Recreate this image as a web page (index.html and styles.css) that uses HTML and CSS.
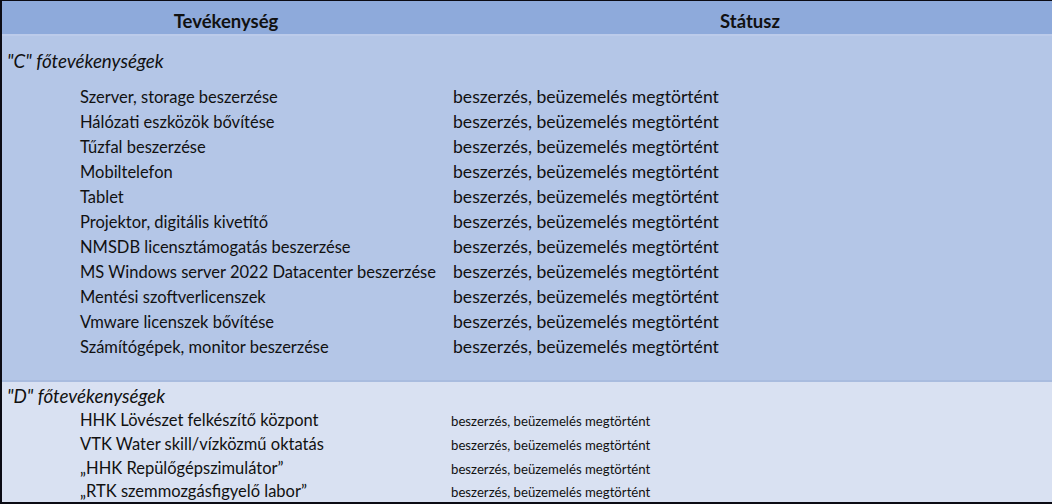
FILE: index.html
```html
<!DOCTYPE html>
<html lang="hu">
<head>
<meta charset="utf-8">
<link rel="stylesheet" href="styles.css">
</head>
<body>
<div class="sheet">
  <div class="head">
    <div class="hcell c1">Tevékenység</div>
    <div class="hcell c2">Státusz</div>
  </div>
  <div class="sec sec-c">
    <div class="label">"C" főtevékenységek</div>
    <div class="rows">
      <div class="row"><span class="act">Szerver, storage beszerzése</span><span class="st">beszerzés, beüzemelés megtörtént</span></div>
      <div class="row"><span class="act">Hálózati eszközök bővítése</span><span class="st">beszerzés, beüzemelés megtörtént</span></div>
      <div class="row"><span class="act">Tűzfal beszerzése</span><span class="st">beszerzés, beüzemelés megtörtént</span></div>
      <div class="row"><span class="act">Mobiltelefon</span><span class="st">beszerzés, beüzemelés megtörtént</span></div>
      <div class="row"><span class="act">Tablet</span><span class="st">beszerzés, beüzemelés megtörtént</span></div>
      <div class="row"><span class="act">Projektor, digitális kivetítő</span><span class="st">beszerzés, beüzemelés megtörtént</span></div>
      <div class="row"><span class="act">NMSDB licensztámogatás beszerzése</span><span class="st">beszerzés, beüzemelés megtörtént</span></div>
      <div class="row"><span class="act">MS Windows server 2022 Datacenter beszerzése</span><span class="st">beszerzés, beüzemelés megtörtént</span></div>
      <div class="row"><span class="act">Mentési szoftverlicenszek</span><span class="st">beszerzés, beüzemelés megtörtént</span></div>
      <div class="row"><span class="act">Vmware licenszek bővítése</span><span class="st">beszerzés, beüzemelés megtörtént</span></div>
      <div class="row"><span class="act">Számítógépek, monitor beszerzése</span><span class="st">beszerzés, beüzemelés megtörtént</span></div>
    </div>
  </div>
  <div class="sec sec-d">
    <div class="label">"D" főtevékenységek</div>
    <div class="rows">
      <div class="row"><span class="act">HHK Lövészet felkészítő központ</span><span class="st small">beszerzés, beüzemelés megtörtént</span></div>
      <div class="row"><span class="act">VTK Water skill/vízközmű oktatás</span><span class="st small">beszerzés, beüzemelés megtörtént</span></div>
      <div class="row"><span class="act">„HHK Repülőgépszimulátor”</span><span class="st small">beszerzés, beüzemelés megtörtént</span></div>
      <div class="row last"><span class="act">„RTK szemmozgásfigyelő labor”</span><span class="st small">beszerzés, beüzemelés megtörtént</span></div>
    </div>
  </div>
</div>
</body>
</html>
```
FILE: styles.css
```css
html, body {
  margin: 0;
  padding: 0;
  background: #0b0b14;
}
body {
  font-family: Lato, "Open Sans", sans-serif;
  color: #111;
  width: 1052px;
  height: 504px;
  overflow: hidden;
}
.sheet {
  width: 1050px;
  height: 501px;
  margin: 1px 0 0 2px;
  overflow: hidden;
  display: flex;
  flex-direction: column;
}
.head {
  flex: none;
  height: 33px;
  box-sizing: content-box;
  background: #8eaadb;
  display: grid;
  grid-template-columns: 448px 1fr;
  align-items: center;
  border-bottom: 2px solid #bccbea;
  font-weight: 700;
  font-size: 18.5px;
}
.hcell {
  text-align: center;
  padding-top: 6px;
}
.c2 { padding-right: 2px; }
.sec-c {
  background: #b4c6e7;
  height: 346px;
  flex: none;
  border-bottom: 2px solid #a9bcdf;
  box-sizing: border-box;
  padding-top: 12px;
}
.sec-d {
  background: #d9e1f2;
  flex: 1;
  min-height: 0;
  overflow: hidden;
  padding-top: 1px;
}
.label {
  font-style: italic;
  font-size: 18.8px;
  height: 25px;
  line-height: 25px;
  padding-left: 5px;
}
.sec-c .label { margin-bottom: 11px; }
.row {
  display: grid;
  grid-template-columns: 448px 1fr;
  align-items: baseline;
  height: 25px;
  line-height: 25px;
  font-size: 16.5px;
}
.sec-d .row { height: 24px; line-height: 24px; }
.sec-d .row.last { height: 22px; line-height: 22px; }
.act { padding-left: 78px; white-space: nowrap; }
.st { padding-left: 3px; white-space: nowrap; font-size: 17.6px; }
.st.small { font-size: 13.2px; padding-left: 1px; }
```
